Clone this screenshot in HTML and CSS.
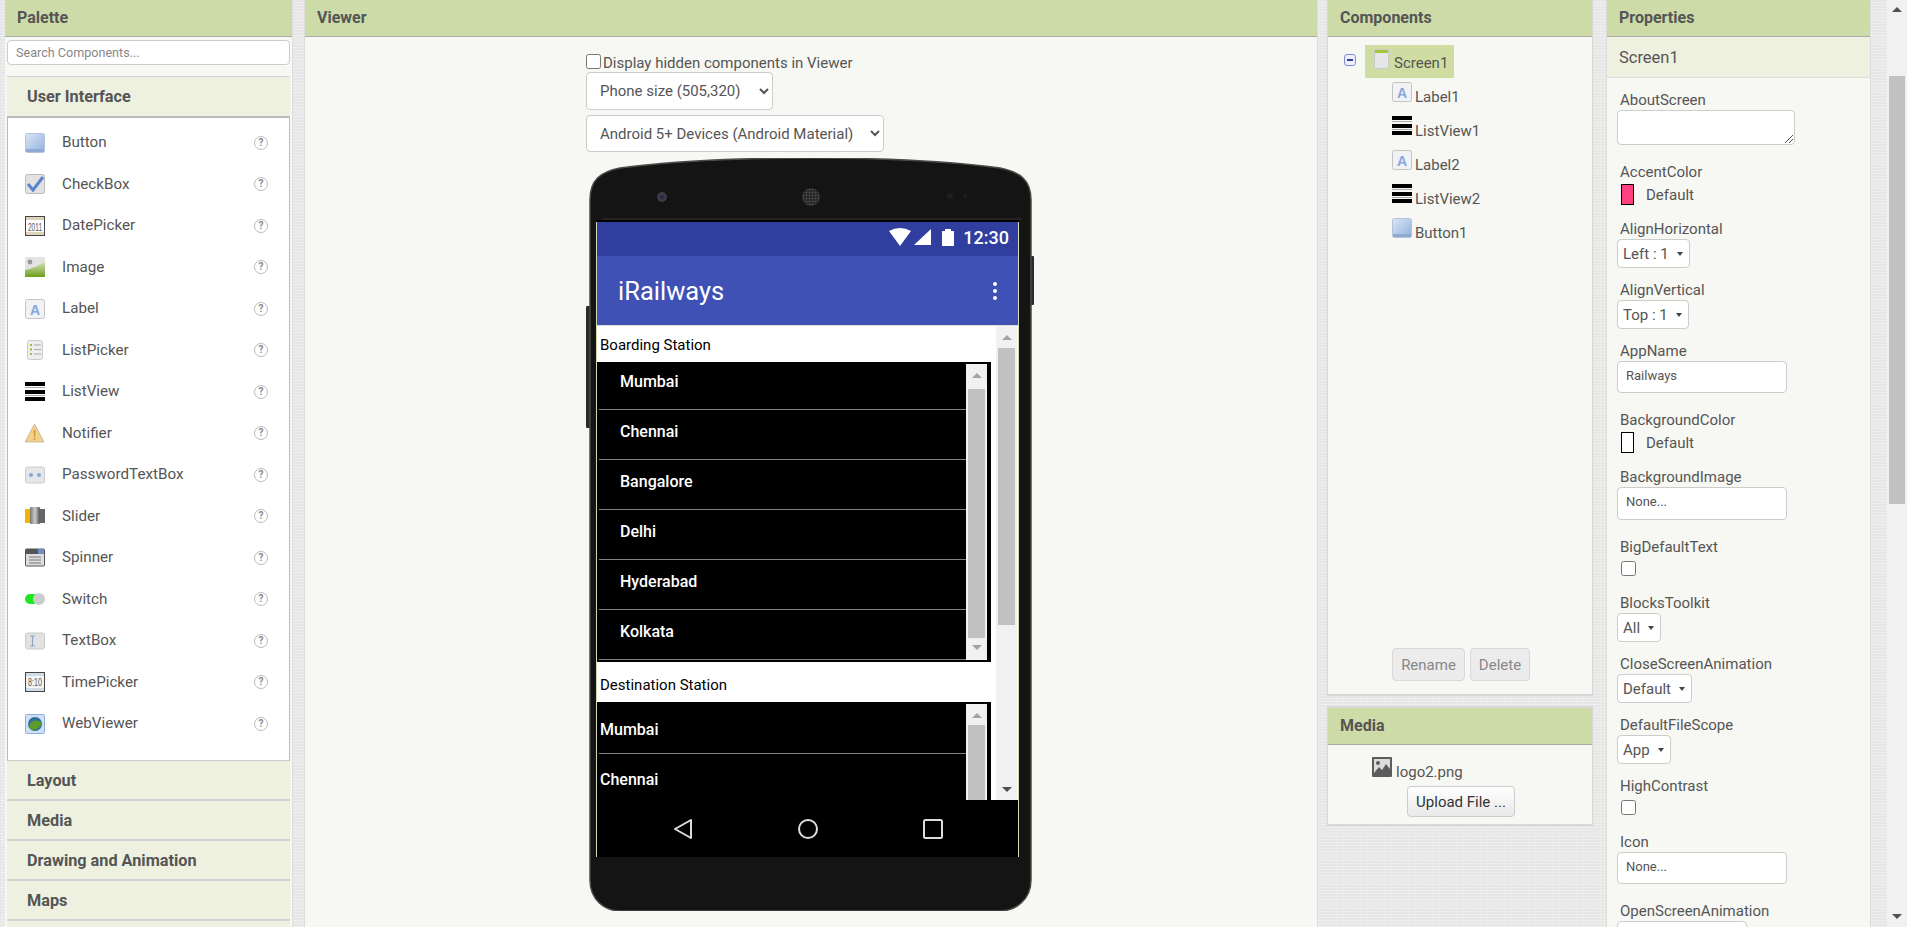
FILE: index.html
```html
<!DOCTYPE html>
<html lang="en">
<head>
  <meta charset="UTF-8">
  <title>iRailways - Designer</title>
  <link rel="stylesheet" href="styles.css">
</head>
<body>
  <svg class="icon-defs" width="0" height="0">
    <defs>
      <linearGradient id="btn-fill" x1="0" y1="0" x2="1" y2="1">
        <stop offset="0" stop-color="#dbe7f7"/><stop offset="1" stop-color="#8fb0de"/>
      </linearGradient>
      <linearGradient id="img-fill" x1="0" y1="0" x2="0" y2="1">
        <stop offset="0" stop-color="#d9e6c4"/><stop offset="1" stop-color="#6f9e1c"/>
      </linearGradient>
      <linearGradient id="slider-fill" x1="0" y1="0" x2="1" y2="0">
        <stop offset="0" stop-color="#777"/><stop offset=".5" stop-color="#ccc"/><stop offset="1" stop-color="#555"/>
      </linearGradient>
      <pattern id="speaker-dots" width="3" height="3" patternUnits="userSpaceOnUse">
        <rect width="3" height="3" fill="#2a2a2a"/>
        <circle cx="1.500" cy="1.500" r=".8" fill="#555"/>
      </pattern>
      <symbol id="i-button" viewBox="0 0 20 20">
        <rect x=".5" y=".5" width="19" height="19" rx="2" fill="url(#btn-fill)" stroke="#b4c3d8"/>
        <rect x="1" y="16" width="18" height="3" fill="#8ea9d2"/>
      </symbol>
      <symbol id="i-checkbox" viewBox="0 0 20 20">
        <rect x=".5" y=".5" width="19" height="19" rx="2" fill="#e2e2e2" stroke="#bbb"/>
        <path d="M3 10l5 6L18 3" fill="none" stroke="#5a86cf" stroke-width="3"/>
      </symbol>
      <symbol id="i-date" viewBox="0 0 20 20">
        <rect x=".5" y=".5" width="19" height="19" fill="#fff" stroke="#444"/>
        <rect x="1" y="1" width="18" height="3" fill="#dcd3b8"/>
        <rect x="1" y="16" width="18" height="3" fill="#dcd3b8"/>
        <text x="3" y="14.500" font-size="11" textLength="14" lengthAdjust="spacingAndGlyphs" fill="#555" font-family="Liberation Sans, sans-serif">2011</text>
      </symbol>
      <symbol id="i-image" viewBox="0 0 20 20">
        <rect width="20" height="20" rx="1" fill="#e3e3e3"/>
        <path d="M0 13q9-1 20-9v16H0z" fill="url(#img-fill)"/>
        <circle cx="5" cy="5" r="2.4" fill="#999"/>
      </symbol>
      <symbol id="i-label" viewBox="0 0 20 20">
        <rect x=".5" y=".5" width="19" height="19" rx="2" fill="#f0f2f6" stroke="#c4c4c4"/>
        <text x="10" y="15.5" font-size="14" font-weight="700" text-anchor="middle" fill="#86a9dc" font-family="Liberation Sans, sans-serif">A</text>
      </symbol>
      <symbol id="i-listpicker" viewBox="0 0 20 20">
        <rect x="2.5" y=".5" width="15" height="19" rx="2" fill="#eee" stroke="#ccc"/>
        <path d="M9 5h7M9 9.500h7M9 14h7" stroke="#aaa"/>
        <path d="M5 5h2M5 9.500h2M5 14h2" stroke="#9cbf3c" stroke-width="2"/>
      </symbol>
      <symbol id="i-listview" viewBox="0 0 20 20">
        <path d="M0 0h20v4H0zM0 8h20v4H0zM0 15h20v4H0z" fill="#000"/>
        <path d="M0 5h20v1H0zM0 13h20v1H0z" fill="#aaa"/>
      </symbol>
      <symbol id="i-notifier" viewBox="0 0 20 20">
        <path d="M9.500 1L19 19H0z" fill="#f1cf8e" stroke="#c3b489" stroke-width=".8"/>
        <path d="M8.600 7h2l-.4 7H9z" fill="#d99a2c"/>
        <rect x="8.800" y="15" width="1.500" height="2" fill="#d99a2c"/>
      </symbol>
      <symbol id="i-password" viewBox="0 0 20 20">
        <rect x=".5" y="2" width="19" height="16" rx="2" fill="#e4e6ea" stroke="#ccc"/>
        <circle cx="6" cy="10" r="2" fill="#86a9dc"/><circle cx="14" cy="10" r="2" fill="#86a9dc"/>
      </symbol>
      <symbol id="i-slider" viewBox="0 0 20 20">
        <rect y="3" width="6" height="14" fill="#f2b400"/>
        <rect x="13" y="3" width="7" height="14" fill="#666"/>
        <rect x="5" y="1" width="10" height="17" rx="1" fill="url(#slider-fill)"/>
      </symbol>
      <symbol id="i-spinner" viewBox="0 0 20 20">
        <rect x=".5" y="1" width="19" height="17" rx="1" fill="#ddd" stroke="#555"/>
        <rect x="1" y="1" width="18" height="5" fill="#555"/>
        <rect x="13" y="1" width="6" height="5" fill="#6f8fc4"/>
        <path d="M4 9h12M4 12h12M4 15h12" stroke="#777"/>
      </symbol>
      <symbol id="i-switch" viewBox="0 0 20 20">
        <rect y="5" width="14" height="10" rx="5" fill="#1ee81e"/>
        <circle cx="14" cy="10" r="6" fill="#ccc"/>
      </symbol>
      <symbol id="i-textbox" viewBox="0 0 20 20">
        <rect x=".5" y="2" width="19" height="16" rx="2" fill="#e2e2e2" stroke="#ccc"/>
        <path d="M5 5h5M5 15h5M7.500 5v10" stroke="#8fa3c2" stroke-width="1.200" fill="none"/>
      </symbol>
      <symbol id="i-time" viewBox="0 0 20 20">
        <rect x=".5" y=".5" width="19" height="19" fill="#f3f6f8" stroke="#444"/>
        <rect x="1" y="1" width="18" height="3" fill="#cfdbe6"/>
        <rect x="1" y="16" width="18" height="3" fill="#cfdbe6"/>
        <text x="3" y="14" font-size="10.500" textLength="14" lengthAdjust="spacingAndGlyphs" fill="#555" font-family="Liberation Sans, sans-serif">8:10</text>
      </symbol>
      <symbol id="i-webviewer" viewBox="0 0 20 20">
        <rect x=".5" y=".5" width="19" height="19" rx="1" fill="#cfe0f5" stroke="#8db0dc"/>
        <circle cx="10" cy="10" r="7" fill="#2d6e9e"/>
        <path d="M3.500 12q4-7 10-5t3 4q-5 6-10 5z" fill="#5d9a2e"/>
      </symbol>
      <symbol id="i-screen" viewBox="0 0 15 20">
        <rect x=".5" y=".5" width="14" height="19" rx="2" fill="#e6e6e6" stroke="#c9c9c9"/>
        <path d="M1 1h13v3H1z" fill="#a4c639"/>
      </symbol>
      <symbol id="i-media" viewBox="0 0 20 20">
        <rect width="20" height="20" rx="1" fill="#5c5c5c"/>
        <rect x="2" y="2" width="16" height="14" fill="#dcdcdc"/>
        <path d="M2 16l5-6 3 3 4-6 4 5v4z" fill="#5c5c5c"/>
        <circle cx="6" cy="6" r="2" fill="#5c5c5c"/>
      </symbol>
    </defs>
  </svg>

  <div class="app">
    <section class="panel palette">
      <h2 class="panel-title">Palette</h2>
      <div class="palette-search"><input class="search-input" type="text" placeholder="Search Components..."></div>
      <div class="drawer drawer-first">User Interface</div>
      <ul class="palette-list">
        <li class="palette-row"><svg class="pal-icon"><use href="#i-button"/></svg><span class="pal-name">Button</span><span class="help">?</span></li>
        <li class="palette-row"><svg class="pal-icon"><use href="#i-checkbox"/></svg><span class="pal-name">CheckBox</span><span class="help">?</span></li>
        <li class="palette-row"><svg class="pal-icon"><use href="#i-date"/></svg><span class="pal-name">DatePicker</span><span class="help">?</span></li>
        <li class="palette-row"><svg class="pal-icon"><use href="#i-image"/></svg><span class="pal-name">Image</span><span class="help">?</span></li>
        <li class="palette-row"><svg class="pal-icon"><use href="#i-label"/></svg><span class="pal-name">Label</span><span class="help">?</span></li>
        <li class="palette-row"><svg class="pal-icon"><use href="#i-listpicker"/></svg><span class="pal-name">ListPicker</span><span class="help">?</span></li>
        <li class="palette-row"><svg class="pal-icon"><use href="#i-listview"/></svg><span class="pal-name">ListView</span><span class="help">?</span></li>
        <li class="palette-row"><svg class="pal-icon"><use href="#i-notifier"/></svg><span class="pal-name">Notifier</span><span class="help">?</span></li>
        <li class="palette-row"><svg class="pal-icon"><use href="#i-password"/></svg><span class="pal-name">PasswordTextBox</span><span class="help">?</span></li>
        <li class="palette-row"><svg class="pal-icon"><use href="#i-slider"/></svg><span class="pal-name">Slider</span><span class="help">?</span></li>
        <li class="palette-row"><svg class="pal-icon"><use href="#i-spinner"/></svg><span class="pal-name">Spinner</span><span class="help">?</span></li>
        <li class="palette-row"><svg class="pal-icon"><use href="#i-switch"/></svg><span class="pal-name">Switch</span><span class="help">?</span></li>
        <li class="palette-row"><svg class="pal-icon"><use href="#i-textbox"/></svg><span class="pal-name">TextBox</span><span class="help">?</span></li>
        <li class="palette-row"><svg class="pal-icon"><use href="#i-time"/></svg><span class="pal-name">TimePicker</span><span class="help">?</span></li>
        <li class="palette-row"><svg class="pal-icon"><use href="#i-webviewer"/></svg><span class="pal-name">WebViewer</span><span class="help">?</span></li>
      </ul>
      <div class="drawer">Layout</div>
      <div class="drawer">Media</div>
      <div class="drawer">Drawing and Animation</div>
      <div class="drawer">Maps</div>
      <div class="drawer"></div>
    </section>

    <section class="panel viewer">
      <h2 class="panel-title">Viewer</h2>
      <div class="viewer-body">
        <label class="hidden-toggle"><input class="hidden-check" type="checkbox">Display hidden components in Viewer</label>
        <select class="viewer-select size-select"><option>Phone size (505,320)</option></select>
        <select class="viewer-select theme-select"><option>Android 5+ Devices (Android Material)</option></select>

        <div class="phone">
          <svg class="phone-shell" viewBox="0 0 448 753" width="448" height="753">
            <rect x="0" y="148" width="6" height="122" rx="1" fill="#2b2b2b"/>
            <rect x="444" y="98" width="4" height="49" rx="1" fill="#2b2b2b"/>
            <path d="M4 42C4 22 14 14 34 10C94 2 174 0 224 0C274 0 354 2 414 10C434 14 445 22 445 42L445 722C445 742 429 753 414 753L34 753C19 753 4 742 4 722Z" fill="#141414" stroke="#4a4a4a" stroke-width="1.500"/>
            <circle cx="76" cy="39" r="5" fill="#3b3b44"/>
            <circle cx="76" cy="39" r="2" fill="#23284a"/>
            <circle cx="225" cy="39" r="9" fill="url(#speaker-dots)"/>
            <circle cx="364" cy="38" r="3" fill="#1e1e1e"/>
            <circle cx="379" cy="38" r="2" fill="#1e1e1e"/>
            <path d="M16 61H436" stroke="#333"/>
          </svg>
          <div class="screen">
            <div class="status-bar">
              <svg class="status-icons" width="66" height="18" viewBox="0 0 66 18">
                <path d="M0 3Q11-3 22 3L11 18z" fill="#fff"/>
                <path d="M25 17L42 1v16z" fill="#fff"/>
                <path d="M53 3h3V1h6v2h3v15H53z" fill="#fff"/>
              </svg>
              <span class="status-time">12:30</span>
            </div>
            <div class="app-bar">
              <span class="app-title">iRailways</span>
              <span class="app-menu"><i></i><i></i><i></i></span>
            </div>
            <div class="screen-body">
              <div class="form">
                <div class="form-label">Boarding Station</div>
                <div class="list-box list-box-first">
                  <div class="list-rows">
                    <div class="list-row">Mumbai</div>
                    <div class="list-row">Chennai</div>
                    <div class="list-row">Bangalore</div>
                    <div class="list-row">Delhi</div>
                    <div class="list-row">Hyderabad</div>
                    <div class="list-row">Kolkata</div>
                  </div>
                  <div class="mini-scroll">
                    <span class="arrow-up arrow-soft"></span>
                    <span class="mini-thumb"></span>
                    <span class="arrow-down arrow-soft"></span>
                  </div>
                </div>
                <div class="form-label form-label-second">Destination Station</div>
                <div class="list-box list-box-second">
                  <div class="list-rows">
                    <div class="list-row">Mumbai</div>
                    <div class="list-row">Chennai</div>
                  </div>
                  <div class="mini-scroll">
                    <span class="arrow-up arrow-soft"></span>
                    <span class="mini-thumb"></span>
                  </div>
                </div>
              </div>
              <div class="form-scroll">
                <span class="arrow-up arrow-soft"></span>
                <span class="form-thumb"></span>
                <span class="arrow-down"></span>
              </div>
            </div>
            <div class="nav-bar">
              <svg width="20" height="22" viewBox="0 0 20 22"><path d="M18 2v18L2 11z" fill="none" stroke="#ddd" stroke-width="2" stroke-linejoin="round"/></svg>
              <svg width="20" height="20" viewBox="0 0 20 20"><circle cx="10" cy="10" r="9" fill="none" stroke="#ddd" stroke-width="2"/></svg>
              <svg width="20" height="20" viewBox="0 0 20 20"><rect x="1" y="1" width="18" height="18" rx="1.500" fill="none" stroke="#ddd" stroke-width="2"/></svg>
            </div>
          </div>
        </div>
      </div>
    </section>

    <div class="middle-col">
      <section class="panel components">
        <h2 class="panel-title">Components</h2>
        <div class="tree">
          <div class="tree-root">
            <span class="tree-toggle"></span>
            <span class="tree-selected"><svg class="root-icon"><use href="#i-screen"/></svg><span class="tree-name">Screen1</span></span>
          </div>
          <div class="tree-row"><svg class="tree-icon"><use href="#i-label"/></svg><span class="tree-name">Label1</span></div>
          <div class="tree-row"><svg class="tree-icon"><use href="#i-listview"/></svg><span class="tree-name">ListView1</span></div>
          <div class="tree-row"><svg class="tree-icon"><use href="#i-label"/></svg><span class="tree-name">Label2</span></div>
          <div class="tree-row"><svg class="tree-icon"><use href="#i-listview"/></svg><span class="tree-name">ListView2</span></div>
          <div class="tree-row"><svg class="tree-icon"><use href="#i-button"/></svg><span class="tree-name">Button1</span></div>
        </div>
        <div class="comp-actions">
          <button class="btn btn-disabled rename-btn">Rename</button>
          <button class="btn btn-disabled delete-btn">Delete</button>
        </div>
      </section>
      <section class="panel media">
        <h2 class="panel-title">Media</h2>
        <div class="media-file"><svg class="tree-icon"><use href="#i-media"/></svg><span class="media-name">logo2.png</span></div>
        <div class="media-actions"><button class="btn upload-btn">Upload File ...</button></div>
      </section>
    </div>

    <section class="panel properties">
      <h2 class="panel-title">Properties</h2>
      <div class="prop-screen">Screen1</div>
      <div class="prop-list">
        <div class="prop">
          <div class="prop-label">AboutScreen</div>
          <div class="prop-area"><svg width="10" height="10" viewBox="0 0 10 10"><path d="M1 9l8-8M5 9l4-4" stroke="#555" fill="none"/></svg></div>
        </div>
        <div class="prop">
          <div class="prop-label">AccentColor</div>
          <div class="prop-color"><span class="swatch swatch-accent"></span>Default</div>
        </div>
        <div class="prop prop-tight">
          <div class="prop-label">AlignHorizontal</div>
          <div class="prop-select">Left : 1<i class="caret"></i></div>
        </div>
        <div class="prop prop-tight">
          <div class="prop-label">AlignVertical</div>
          <div class="prop-select">Top : 1<i class="caret"></i></div>
        </div>
        <div class="prop">
          <div class="prop-label">AppName</div>
          <div class="prop-input">Railways</div>
        </div>
        <div class="prop">
          <div class="prop-label">BackgroundColor</div>
          <div class="prop-color"><span class="swatch"></span>Default</div>
        </div>
        <div class="prop">
          <div class="prop-label">BackgroundImage</div>
          <div class="prop-input prop-input-tall">None...</div>
        </div>
        <div class="prop">
          <div class="prop-label">BigDefaultText</div>
          <input class="prop-check" type="checkbox">
        </div>
        <div class="prop prop-tight">
          <div class="prop-label">BlocksToolkit</div>
          <div class="prop-select">All<i class="caret"></i></div>
        </div>
        <div class="prop prop-tight">
          <div class="prop-label">CloseScreenAnimation</div>
          <div class="prop-select">Default<i class="caret"></i></div>
        </div>
        <div class="prop prop-tight">
          <div class="prop-label">DefaultFileScope</div>
          <div class="prop-select">App<i class="caret"></i></div>
        </div>
        <div class="prop">
          <div class="prop-label">HighContrast</div>
          <input class="prop-check" type="checkbox">
        </div>
        <div class="prop">
          <div class="prop-label">Icon</div>
          <div class="prop-input">None...</div>
        </div>
        <div class="prop">
          <div class="prop-label">OpenScreenAnimation</div>
          <div class="prop-select prop-select-wide"></div>
        </div>
      </div>
    </section>

    <div class="page-scroll">
      <span class="arrow-up"></span>
      <span class="page-thumb"></span>
      <span class="arrow-down"></span>
    </div>
  </div>
</body>
</html>
```

FILE: styles.css
```css
html, body {
  margin: 0;
  padding: 0;
  height: 100%;
  overflow: hidden;
}

body {
  font-family: Roboto, sans-serif;
  font-size: 14px;
  color: #555;
}

.icon-defs {
  position: absolute;
}

.app {
  display: flex;
  height: 927px;
  padding-left: 5px;
  box-sizing: border-box;
  background-color: #e8e8e8;
  background-image:
    repeating-linear-gradient(0deg, rgba(255, 255, 255, .35) 0 1px, transparent 1px 3px),
    repeating-linear-gradient(90deg, rgba(0, 0, 0, .025) 0 1px, transparent 1px 3px);
}

.panel {
  background-color: #f7f8f3;
  box-sizing: border-box;
  overflow: hidden;
}

.panel-title {
  margin: 0;
  height: 37px;
  padding: 0 12px;
  box-sizing: border-box;
  line-height: 35px;
  font-size: 16px;
  font-weight: 700;
  color: #555;
  background-color: #cddba8;
  border-bottom: 1px solid #aaa;
}

/* palette */
.palette {
  width: 288px;
  height: 927px;
  border-right: 1px solid #ddd;
}

.palette-search {
  padding: 3px 2px 11px;
}

.search-input {
  display: block;
  width: 100%;
  height: 25px;
  box-sizing: border-box;
  padding: 0 8px;
  font-family: Roboto, sans-serif;
  font-size: 12.600px;
  background: #fff;
  border: 1px solid #ccc;
  border-radius: 4px;
  outline: none;
}

.search-input::placeholder {
  color: #888;
}

.drawer {
  margin: 0 2px;
  height: 40px;
  box-sizing: border-box;
  padding-left: 20px;
  line-height: 39px;
  font-size: 16.250px;
  font-weight: 700;
  color: #555;
  background-color: #eef1e0;
  border-bottom: 2px solid #d4d4d4;
}

.drawer-first {
  border-top: 1px solid #d4d4d4;
  border-bottom: none;
}

.palette-list {
  list-style: none;
  margin: 0 2px;
  padding: 4px 0 17px;
  height: 645px;
  box-sizing: border-box;
  background: #fff;
  border: 1px solid #bbb;
  border-top-width: 2px;
  border-bottom-color: #ccc;
}

.palette-row {
  display: flex;
  align-items: center;
  height: 41.500px;
  padding-left: 17px;
}

.pal-icon {
  width: 20px;
  height: 20px;
  flex: none;
}

.pal-name {
  margin-left: 17px;
  padding-bottom: 1px;
  font-size: 15.200px;
  flex: 1;
}

.help {
  width: 12px;
  height: 12px;
  margin-right: 21px;
  border: 1.500px solid #bbb;
  border-radius: 50%;
  font-size: 10px;
  font-weight: 700;
  line-height: 12px;
  text-align: center;
  color: #888;
}

/* viewer */
.viewer {
  width: 1014px;
  height: 927px;
  margin-left: 11px;
  border-left: 1px solid #ddd;
  border-right: 1px solid #ddd;
}

.viewer-body {
  padding: 15px 0 0 281px;
}

.hidden-toggle {
  display: flex;
  align-items: flex-end;
  height: 20px;
  font-size: 15px;
}

.hidden-check {
  width: 15px;
  height: 15px;
  margin: 0 2px 3px 0;
}

.viewer-select {
  display: block;
  height: 38px;
  margin-top: 0;
  padding: 0 6px 0 9px;
  font-family: Roboto, sans-serif;
  font-size: 15px;
  color: #555;
  background: #fff;
  border: 1px solid #ccc;
  border-radius: 4px;
}

.size-select {
  width: 187px;
}

.theme-select {
  width: 298px;
  height: 37px;
  margin-top: 5px;
}

.phone {
  position: relative;
  width: 448px;
  height: 753px;
  margin-top: 6px;
  padding: 64px 0 0 10px;
  box-sizing: border-box;
}

.phone-shell {
  position: absolute;
  left: 0;
  top: 0;
}

.screen {
  position: relative;
  width: 423px;
  height: 635px;
  box-sizing: border-box;
  display: flex;
  flex-direction: column;
  background: #fff;
  border-left: 1px solid #d5d9b0;
  border-right: 1px solid #d5d9b0;
  box-shadow: 0 -2px 0 #000;
}

.status-bar {
  display: flex;
  justify-content: flex-end;
  align-items: center;
  height: 34px;
  box-sizing: border-box;
  padding: 0 9px 4px 0;
  background: #303f9f;
}

.status-icons {
  margin-right: 8px;
}

.status-time {
  font-size: 18px;
  font-weight: 500;
  color: #fff;
}

.app-bar {
  display: flex;
  justify-content: space-between;
  align-items: center;
  height: 70px;
  padding: 0 21px 0 21px;
  box-sizing: border-box;
  background: #3f51b5;
  border-bottom: 1px solid #e0e0e0;
}

.app-title {
  font-size: 25.500px;
  color: #fff;
}

.app-menu {
  display: flex;
  flex-direction: column;
  gap: 3px;
}

.app-menu i {
  width: 4px;
  height: 4px;
  border-radius: 50%;
  background: #fff;
}

.screen-body {
  display: flex;
  height: 474px;
  overflow: hidden;
}

.form {
  width: 399px;
  flex: none;
}

.form-label {
  height: 36px;
  padding-left: 3px;
  font-size: 15px;
  line-height: 39px;
  color: #000;
}

.form-label-second {
  height: 40px;
  line-height: 46px;
}

.list-box {
  display: flex;
  width: 394px;
  box-sizing: border-box;
  overflow: hidden;
  background: #000;
  border: solid #000;
  border-width: 2px 2px 2px 0;
}

.list-box-first {
  height: 300px;
}

.list-box-second {
  height: 100px;
  border-bottom: none;
}

.list-rows {
  flex: 1;
  padding-left: 2px;
  overflow: hidden;
}

.list-row {
  height: 50px;
  box-sizing: border-box;
  padding-left: 21px;
  font-size: 16px;
  font-weight: 500;
  line-height: 44px;
  color: #fff;
  border-bottom: 1px solid #808080;
}

.list-box-first .list-rows {
  margin-top: -4px;
}

.list-box-second .list-row {
  padding: 1px 0 0 1px;
  line-height: 49px;
}

.mini-scroll,
.form-scroll,
.page-scroll {
  display: flex;
  flex-direction: column;
  align-items: center;
  background: #f1f1f1;
}

.mini-scroll {
  width: 21px;
  margin-right: 2px;
  flex: none;
}

.form-scroll {
  width: 21px;
  flex: none;
  margin-left: 0;
}

.arrow-up,
.arrow-down {
  width: 0;
  height: 0;
  flex: none;
  border-left: 5px solid transparent;
  border-right: 5px solid transparent;
}

.arrow-up {
  margin: 9px 0 8px;
  border-bottom: 5px solid #505050;
}

.arrow-down {
  margin: auto 0 8px;
  border-top: 5px solid #505050;
}

.arrow-up.arrow-soft {
  border-bottom-color: #a3a3a3;
}

.arrow-down.arrow-soft {
  border-top-color: #a3a3a3;
}

.mini-thumb {
  width: 17px;
  flex: 1;
  background: #c1c1c1;
}

.list-box-first .arrow-up {
  margin: 9px 0 11px;
}

.list-box-second .arrow-up {
  margin: 9px 0 7px;
}

.mini-thumb + .arrow-down {
  margin: 7px 0 10px;
}

.form-thumb {
  width: 17px;
  height: 277px;
  flex: none;
  background: #c1c1c1;
}

.nav-bar {
  display: flex;
  justify-content: center;
  align-items: center;
  gap: 105px;
  height: 57px;
  background: #000;
}

/* components and media */
.middle-col {
  width: 266px;
  margin-left: 9px;
}

.components {
  height: 696px;
  display: flex;
  flex-direction: column;
  border: solid #d8d8d8;
  border-width: 0 1px 2px;
}

.tree {
  flex: 1;
  padding-top: 8px;
}

.tree-root {
  display: flex;
  align-items: flex-start;
  height: 37px;
}

.tree-toggle {
  position: relative;
  width: 10px;
  height: 10px;
  margin: 9px 9px 0 16px;
  border: 1px solid #7f8fce;
  border-radius: 3px;
  background: #eef;
}

.tree-toggle::after {
  content: "";
  position: absolute;
  left: 2px;
  top: 4px;
  width: 6px;
  height: 2px;
  background: #33419c;
}

.tree-selected {
  display: flex;
  width: 89px;
  height: 33px;
  box-sizing: border-box;
  padding: 4px 0 0 9px;
  background: #cfdda3;
}

.root-icon {
  width: 15px;
  height: 20px;
  flex: none;
}

.root-icon + .tree-name {
  margin: 5px 0 0 5px;
}

.tree-row {
  display: flex;
  height: 34px;
  padding-left: 64px;
}

.tree-icon {
  width: 20px;
  height: 20px;
  flex: none;
}

.tree-name {
  margin: 6px 0 0 3px;
  font-size: 15px;
  line-height: 18px;
}

.comp-actions {
  display: flex;
  gap: 5px;
  padding: 0 0 13px 64px;
}

.btn {
  height: 33px;
  padding: 0;
  font-family: Roboto, sans-serif;
  font-size: 15px;
  color: #333;
  border: 1px solid #ccc;
  border-radius: 4px;
  background: linear-gradient(#fff, #e9e9e9);
}

.btn-disabled {
  color: #888;
  background: #ececec;
  border-color: #d8d8d8;
}

.rename-btn {
  width: 73px;
}

.delete-btn {
  width: 60px;
}

.media {
  height: 120px;
  margin-top: 10px;
  border: solid #d8d8d8;
  border-width: 2px 1px;
}

.media-file {
  display: flex;
  padding: 12px 0 0 44px;
  height: 29px;
}

.media-name {
  margin: 6px 0 0 4px;
  font-size: 15px;
  line-height: 18px;
}

.media-actions {
  padding-left: 79px;
}

.upload-btn {
  width: 108px;
  height: 31px;
}

/* properties */
.properties {
  width: 265px;
  height: 927px;
  margin-left: 13px;
  border-left: 1px solid #ddd;
  border-right: 1px solid #ddd;
}

.prop-screen {
  height: 41px;
  padding-left: 12px;
  box-sizing: border-box;
  font-size: 16.500px;
  line-height: 41px;
  background: #eef1e0;
  border-bottom: 1px solid #ddd;
}

.prop-list {
  padding: 13px 0 0 10px;
}

.prop {
  margin-bottom: 18px;
}

.prop-tight {
  margin-bottom: 13px;
}

.prop-label {
  height: 19px;
  padding-left: 3px;
  font-size: 15px;
  line-height: 18px;
}

.prop-area {
  display: flex;
  justify-content: flex-end;
  align-items: flex-end;
  width: 178px;
  height: 35px;
  box-sizing: border-box;
  background: #fff;
  border: 1px solid #ccc;
  border-radius: 4px;
}

.prop-color {
  display: flex;
  align-items: center;
  height: 21px;
  margin: 2px 0 -3px 4px;
  font-size: 15px;
}

.swatch {
  width: 13px;
  height: 21px;
  margin-right: 12px;
  box-sizing: border-box;
  background: #fff;
  border: 1px solid #000;
}

.swatch-accent {
  background: #ff4081;
}

.prop-select {
  display: inline-flex;
  align-items: center;
  height: 29px;
  padding: 0 6px 0 5px;
  box-sizing: border-box;
  font-size: 15px;
  line-height: 26px;
  vertical-align: top;
  background: #fff;
  border: 1px solid #ccc;
  border-radius: 4px;
}

.prop-select-wide {
  display: flex;
  width: 130px;
}

.caret {
  width: 0;
  height: 0;
  margin-left: 8px;
  border-left: 3px solid transparent;
  border-right: 3px solid transparent;
  border-top: 4px solid #444;
}

.prop-input {
  width: 170px;
  height: 32px;
  padding-left: 8px;
  box-sizing: border-box;
  font-size: 13px;
  line-height: 28px;
  background: #fff;
  border: 1px solid #ccc;
  border-radius: 4px;
}

.prop-input-tall {
  height: 33px;
}

.prop-check {
  display: block;
  width: 15px;
  height: 15px;
  margin: 4px 0 0 4px;
}

/* page scrollbar */
.page-scroll {
  width: 20px;
  height: 927px;
  margin-left: 16px;
}

.page-thumb {
  width: 16px;
  height: 428px;
  margin-top: 64px;
  background: #c1c1c1;
}

.page-scroll .arrow-up {
  margin: 7px 0 0;
}
```
